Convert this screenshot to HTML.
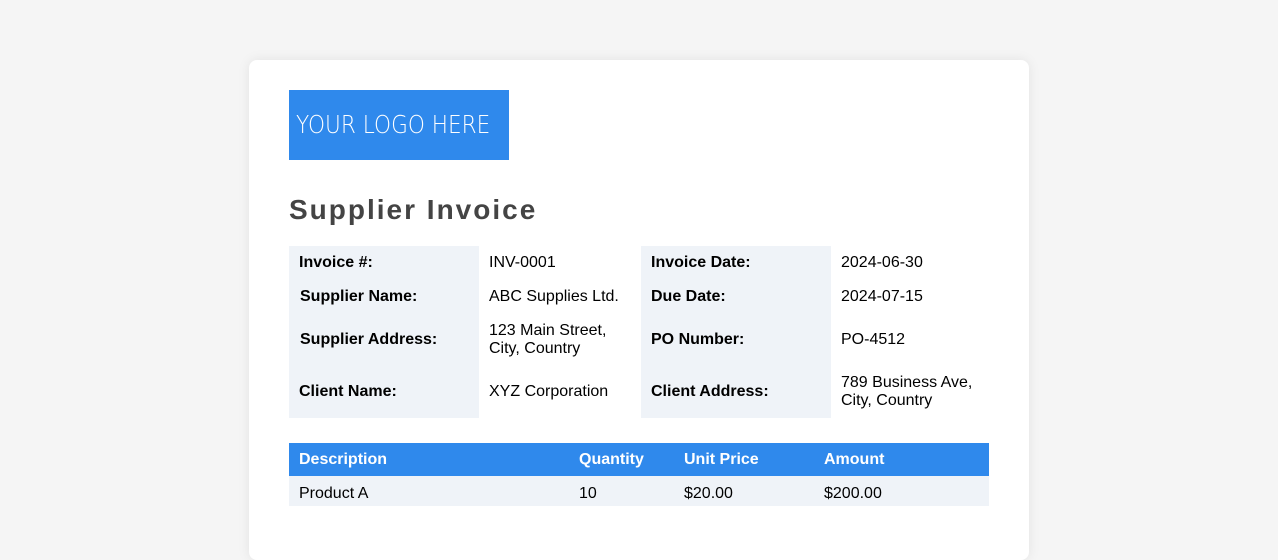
<!DOCTYPE html>
<html><head><meta charset="utf-8"><style>
html,body{margin:0;padding:0;background:#f5f5f5;width:1278px;height:501px;overflow:hidden;font-family:"Liberation Sans",Arial,sans-serif;}
.card{position:absolute;left:249px;top:60px;width:780px;height:500px;background:#fff;border-radius:8px;box-shadow:0 0 12px rgba(0,0,0,0.08);}
.logo{position:absolute;left:289px;top:90px;width:220px;height:70px;background:#2f89ec;overflow:hidden;}
.logo span{position:absolute;left:7px;top:0;line-height:70px;white-space:nowrap;color:#fff;font-size:25px;font-family:"DejaVu Sans","Liberation Sans",sans-serif;font-weight:200;transform:scaleX(0.865);transform-origin:0 50%;}
h1{position:absolute;left:289px;top:193px;margin:0;font-size:28px;font-weight:bold;color:#444;letter-spacing:2px;line-height:34px;}
.c{position:absolute;font-size:16px;color:#000;display:flex;align-items:center;box-sizing:border-box;padding-left:10px;line-height:18px;padding-top:1px;}
.l{background:#eff3f8;font-weight:bold;}
.hd{position:absolute;left:289px;top:443px;width:700px;height:33px;background:#2f89ec;}
.r{position:absolute;left:289px;top:476px;width:700px;height:30px;background:#eff3f8;}
.t{position:absolute;font-size:16px;}
</style></head><body>
<div class="card"></div>
<div class="logo"><span>YOUR LOGO HERE</span></div>
<h1>Supplier Invoice</h1>

<div class="c l" style="left:289px;top:246px;width:190px;height:33px">Invoice #:</div>
<div class="c" style="left:479px;top:246px;width:162px;height:33px">INV-0001</div>
<div class="c l" style="left:641px;top:246px;width:190px;height:33px">Invoice Date:</div>
<div class="c" style="left:831px;top:246px;width:158px;height:33px">2024-06-30</div>

<div class="c l" style="left:289px;top:279px;width:190px;height:34px;padding-left:11px">Supplier Name:</div>
<div class="c" style="left:479px;top:279px;width:162px;height:34px">ABC Supplies Ltd.</div>
<div class="c l" style="left:641px;top:279px;width:190px;height:34px">Due Date:</div>
<div class="c" style="left:831px;top:279px;width:158px;height:34px">2024-07-15</div>

<div class="c l" style="left:289px;top:313px;width:190px;height:52px;padding-left:11px">Supplier Address:</div>
<div class="c" style="left:479px;top:313px;width:162px;height:52px">123 Main Street,<br>City, Country</div>
<div class="c l" style="left:641px;top:313px;width:190px;height:52px">PO Number:</div>
<div class="c" style="left:831px;top:313px;width:158px;height:52px">PO-4512</div>

<div class="c l" style="left:289px;top:365px;width:190px;height:53px">Client Name:</div>
<div class="c" style="left:479px;top:365px;width:162px;height:53px">XYZ Corporation</div>
<div class="c l" style="left:641px;top:365px;width:190px;height:53px">Client Address:</div>
<div class="c" style="left:831px;top:365px;width:158px;height:53px;display:block;padding-top:9px">789 Business Ave,<br>City, Country</div>

<div class="hd"></div>
<div class="t" style="left:299px;top:451px;color:#fff;font-weight:bold">Description</div>
<div class="t" style="left:579px;top:451px;color:#fff;font-weight:bold">Quantity</div>
<div class="t" style="left:684px;top:451px;color:#fff;font-weight:bold">Unit Price</div>
<div class="t" style="left:824px;top:451px;color:#fff;font-weight:bold">Amount</div>
<div class="r"></div>
<div class="t" style="left:299px;top:485px">Product A</div>
<div class="t" style="left:579px;top:485px">10</div>
<div class="t" style="left:684px;top:485px">$20.00</div>
<div class="t" style="left:824px;top:485px">$200.00</div>
</body></html>
